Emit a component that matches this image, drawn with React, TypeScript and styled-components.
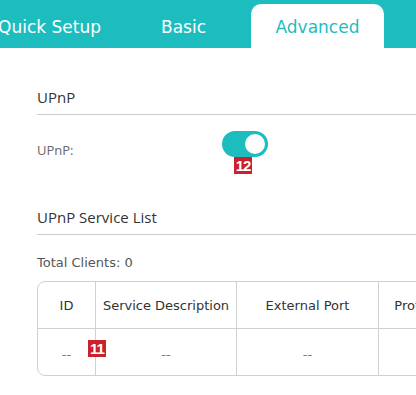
import React, { useState } from "react";
import styled, { createGlobalStyle } from "styled-components";

const GlobalStyle = createGlobalStyle`
	html, body {
		margin: 0;
		padding: 0;
		background: #ffffff;
		overflow: hidden;
	}
	body {
		font-family: "DejaVu Sans", Verdana, sans-serif;
	}
`;

const Page = styled.div`
	position: relative;
	width: 416px;
	height: 395px;
	overflow: hidden;
`;

const TopBar = styled.div`
	height: 48px;
	background: #1dbdbf;
	display: flex;
	align-items: flex-end;
`;

const TabRow = styled.div`
	display: flex;
	margin-left: -17px;
`;

const Tab = styled.div<{ $active?: boolean }>`
	width: 133px;
	height: 44px;
	margin-right: 1px;
	display: flex;
	align-items: center;
	justify-content: center;
	padding-top: 2px;
	box-sizing: border-box;
	font-size: 17px;
	border-radius: 10px 10px 0 0;
	color: ${(p) => (p.$active ? "#1dbdbf" : "#ffffff")};
	background: ${(p) => (p.$active ? "#ffffff" : "transparent")};
`;

const Content = styled.div`
	padding: 39px 0 0 37px;
`;

const SectionTitle = styled.div<{ $top?: number }>`
	margin-top: ${(p) => p.$top ?? 0}px;
	font-family: "Open Sans", "Noto Sans", sans-serif;
	font-size: 15px;
	line-height: 20px;
	color: #333333;
	padding-bottom: 7px;
	border-bottom: 1px solid #cccccc;
	margin-right: -40px;
`;

const FieldRow = styled.div`
	display: flex;
	align-items: flex-start;
	margin-top: 16px;
	height: 26px;
`;

const FieldLabel = styled.div`
	width: 185px;
	font-family: "Open Sans", "Noto Sans", sans-serif;
	font-size: 13px;
	color: #666666;
	padding-top: 12px;
	line-height: 14px;
`;

const Switch = styled.button<{ $on: boolean }>`
	position: relative;
	width: 46px;
	height: 26px;
	border: none;
	padding: 0;
	border-radius: 13px;
	background: ${(p) => (p.$on ? "#1dbdbf" : "#cccccc")};
	cursor: pointer;

	&::after {
		content: "";
		position: absolute;
		top: 3px;
		left: ${(p) => (p.$on ? "23px" : "3px")};
		width: 20px;
		height: 20px;
		border-radius: 50%;
		background: #ffffff;
	}
`;

const Clients = styled.div`
	margin-top: 21px;
	font-size: 13px;
	color: #555555;
	line-height: 14px;
`;

const Table = styled.div`
	margin-top: 11px;
	width: 600px;
	border: 1px solid #d0d0d0;
	border-radius: 8px;
	overflow: hidden;
`;

const Row = styled.div<{ $head?: boolean }>`
	display: grid;
	grid-template-columns: 58px 141px 142px 84px 100px 1fr;
	height: 46px;
	border-bottom: ${(p) => (p.$head ? "1px solid #d0d0d0" : "none")};
`;

const Cell = styled.div<{ $head?: boolean }>`
	display: flex;
	align-items: center;
	justify-content: center;
	font-size: 13px;
	color: ${(p) => (p.$head ? "#333333" : "#777777")};
	border-right: 1px solid #d0d0d0;
	white-space: nowrap;
	padding-top: ${(p) => (p.$head ? "0" : "4px")};
`;

const Badge = styled.div<{ $x: number; $y: number; $w: number }>`
	position: absolute;
	left: ${(p) => p.$x}px;
	top: ${(p) => p.$y}px;
	width: ${(p) => p.$w}px;
	height: 17px;
	background: #c9222e;
	color: #ffffff;
	font-family: "Liberation Sans", Arial, sans-serif;
	font-weight: bold;
	font-size: 15px;
	line-height: 17px;
	text-align: center;
	letter-spacing: -1px;
`;

const headers = ["ID", "Service Description", "External Port", "Protocol", "Internal Port", "IP Address"];

export default function App() {
	const [upnp, setUpnp] = useState(true);

	return (
		<Page>
			<GlobalStyle />
			<TopBar>
				<TabRow>
					<Tab>Quick Setup</Tab>
					<Tab>Basic</Tab>
					<Tab $active>Advanced</Tab>
				</TabRow>
			</TopBar>
			<Content>
				<SectionTitle>UPnP</SectionTitle>
				<FieldRow>
					<FieldLabel>UPnP:</FieldLabel>
					<Switch $on={upnp} onClick={() => setUpnp(!upnp)} aria-label="UPnP" />
				</FieldRow>
				<SectionTitle $top={50}>UPnP Service List</SectionTitle>
				<Clients>Total Clients: 0</Clients>
				<Table>
					<Row $head>
						{headers.map((h) => (
							<Cell $head key={h}>
								{h}
							</Cell>
						))}
					</Row>
					<Row>
						{headers.map((h) => (
							<Cell key={h}>--</Cell>
						))}
					</Row>
				</Table>
			</Content>
			<Badge $x={234} $y={157} $w={18}>12</Badge>
			<Badge $x={88} $y={340} $w={18}>11</Badge>
		</Page>
	);
}
